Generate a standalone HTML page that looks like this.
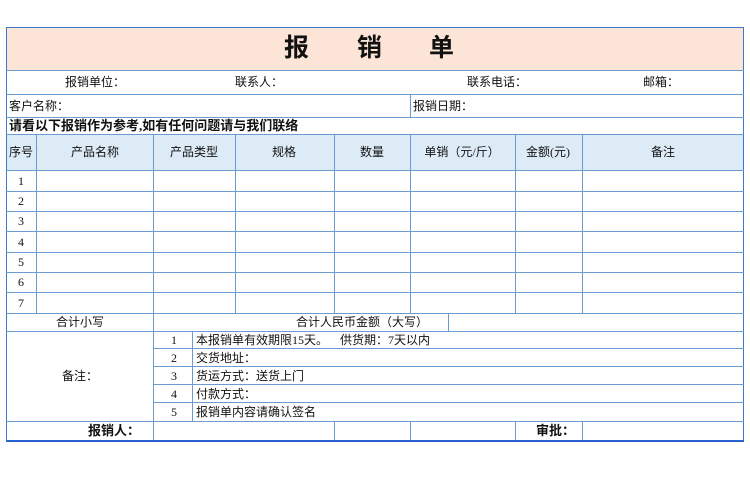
<!DOCTYPE html>
<html><head><meta charset="utf-8"><style>
body{margin:0;width:750px;height:501px;background:#fff;position:relative;overflow:hidden;font-family:"Liberation Serif","Noto Sans CJK SC",sans-serif;font-size:12px;color:#111}
.h{position:absolute;height:1px;background:#6c9bd2}
.v{position:absolute;width:1px;background:#6c9bd2}
.b{position:absolute;background:#ddebf7}
.t{position:absolute;white-space:nowrap;line-height:1}
.c{transform:translateX(-50%)}
.T{position:absolute;top:36px;font-size:25px;font-weight:bold;line-height:1}
</style></head><body>
<div class="b" style="left:6px;top:27px;width:738px;height:44px;background:#fce4d6"></div>
<div class="b" style="left:6px;top:134px;width:738px;height:36px"></div>
<div style="position:absolute;left:6px;top:27px;width:736px;height:412px;border:1px solid #3a78c9;border-bottom:2px solid #2a62d0"></div>
<div class="h" style="left:6px;top:70px;width:738px"></div>
<div class="h" style="left:6px;top:94px;width:738px"></div>
<div class="h" style="left:6px;top:117px;width:738px"></div>
<div class="h" style="left:6px;top:134px;width:738px"></div>
<div class="h" style="left:6px;top:170px;width:738px"></div>
<div class="h" style="left:6px;top:191px;width:738px"></div>
<div class="h" style="left:6px;top:211px;width:738px"></div>
<div class="h" style="left:6px;top:231px;width:738px"></div>
<div class="h" style="left:6px;top:252px;width:738px"></div>
<div class="h" style="left:6px;top:272px;width:738px"></div>
<div class="h" style="left:6px;top:292px;width:738px"></div>
<div class="h" style="left:6px;top:313px;width:738px"></div>
<div class="h" style="left:6px;top:331px;width:738px"></div>
<div class="h" style="left:154px;top:348px;width:590px"></div>
<div class="h" style="left:154px;top:366px;width:590px"></div>
<div class="h" style="left:154px;top:384px;width:590px"></div>
<div class="h" style="left:154px;top:402px;width:590px"></div>
<div class="h" style="left:6px;top:421px;width:738px"></div>
<div class="v" style="left:410px;top:94px;height:23px"></div>
<div class="v" style="left:36px;top:134px;height:179px"></div>
<div class="v" style="left:153px;top:134px;height:306px"></div>
<div class="v" style="left:235px;top:134px;height:179px"></div>
<div class="v" style="left:334px;top:134px;height:179px"></div>
<div class="v" style="left:410px;top:134px;height:179px"></div>
<div class="v" style="left:515px;top:134px;height:179px"></div>
<div class="v" style="left:582px;top:134px;height:179px"></div>
<div class="v" style="left:448px;top:313px;height:18px"></div>
<div class="v" style="left:192px;top:331px;height:90px"></div>
<div class="v" style="left:334px;top:421px;height:19px"></div>
<div class="v" style="left:410px;top:421px;height:19px"></div>
<div class="v" style="left:515px;top:421px;height:19px"></div>
<div class="v" style="left:582px;top:421px;height:19px"></div>
<div class="T" style="left:284px">报</div>
<div class="T" style="left:357px">销</div>
<div class="T" style="left:429px">单</div>
<div class="t" style="left:65px;top:76px">报销单位：</div>
<div class="t" style="left:235px;top:76px">联系人：</div>
<div class="t" style="left:467px;top:76px">联系电话：</div>
<div class="t" style="left:643px;top:76px">邮箱：</div>
<div class="t" style="left:9px;top:100px">客户名称：</div>
<div class="t" style="left:413px;top:100px">报销日期：</div>
<div class="t" style="left:9px;top:119px;font-weight:bold;font-size:13px">请看以下报销作为参考,如有任何问题请与我们联络</div>
<div class="t c" style="left:21px;top:146px">序号</div>
<div class="t c" style="left:95px;top:146px">产品名称</div>
<div class="t c" style="left:194px;top:146px">产品类型</div>
<div class="t c" style="left:284px;top:146px">规格</div>
<div class="t c" style="left:372px;top:146px">数量</div>
<div class="t c" style="left:462px;top:146px">单销（元/斤）</div>
<div class="t c" style="left:548px;top:146px">金额(元)</div>
<div class="t c" style="left:663px;top:146px">备注</div>
<div class="t c" style="left:21px;top:175px">1</div>
<div class="t c" style="left:21px;top:195px">2</div>
<div class="t c" style="left:21px;top:215px">3</div>
<div class="t c" style="left:21px;top:236px">4</div>
<div class="t c" style="left:21px;top:256px">5</div>
<div class="t c" style="left:21px;top:276px">6</div>
<div class="t c" style="left:21px;top:297px">7</div>
<div class="t c" style="left:80px;top:316px">合计小写</div>
<div class="t c" style="left:362px;top:316px">合计人民币金额（大写）</div>
<div class="t c" style="left:80px;top:370px">备注：</div>
<div class="t c" style="left:174px;top:334px">1</div>
<div class="t c" style="left:174px;top:352px">2</div>
<div class="t c" style="left:174px;top:370px">3</div>
<div class="t c" style="left:174px;top:388px">4</div>
<div class="t c" style="left:174px;top:406px">5</div>
<div class="t" style="left:196px;top:334px">本报销单有效期限15天。&nbsp;&nbsp;&nbsp;&nbsp;供货期：7天以内</div>
<div class="t" style="left:196px;top:352px">交货地址：</div>
<div class="t" style="left:196px;top:370px">货运方式：送货上门</div>
<div class="t" style="left:196px;top:388px">付款方式：</div>
<div class="t" style="left:196px;top:406px">报销单内容请确认签名</div>
<div class="t" style="left:88px;top:424px;font-weight:bold;font-size:13px">报销人：</div>
<div class="t" style="left:536px;top:424px;font-weight:bold;font-size:13px">审批：</div>
</body></html>
